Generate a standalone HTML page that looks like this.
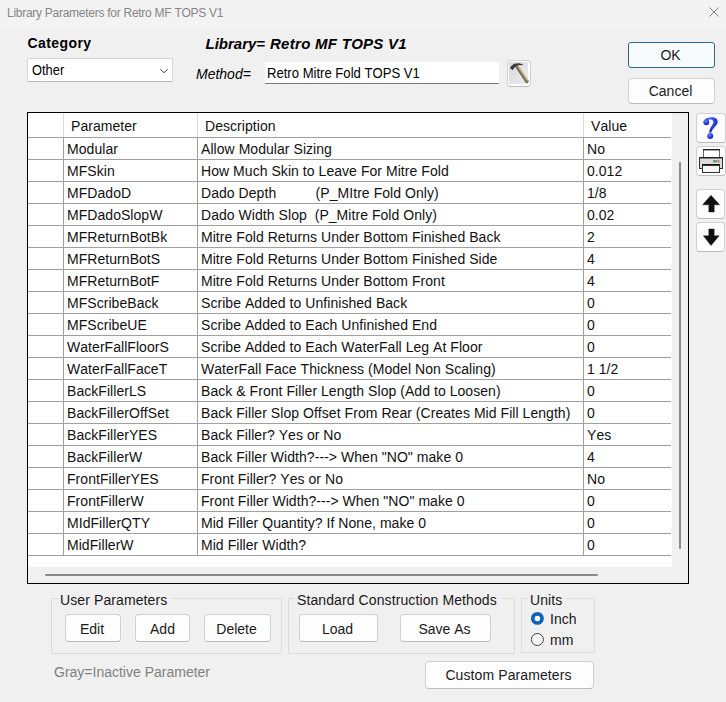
<!DOCTYPE html>
<html><head><meta charset="utf-8">
<style>
*{margin:0;padding:0;box-sizing:border-box}
html,body{width:726px;height:702px;overflow:hidden;background:#f0f0f0;font-family:"Liberation Sans",sans-serif;color:#000;font-kerning:none;font-feature-settings:"kern" 0}
.a{position:absolute;white-space:pre}
#title{left:0;top:0;width:726px;height:28px;background:#f3f3f3}
.btn{position:absolute;background:#fdfdfd;border:1px solid #d0d0d0;border-bottom-color:#bcbcbc;border-radius:4px;font-size:14px;text-align:center;color:#1a1a1a}
.grp{position:absolute;border:1px solid #dcdcdc;border-radius:1px}
.glab{position:absolute;background:#f0f0f0;font-size:14px;padding:0 4px 0 2px;color:#1a1a1a;margin-top:0.5px;letter-spacing:0.1px}
#grid{left:27px;top:112px;width:662px;height:472px;border:1px solid #000;background:#f0f0f0}
.row{position:absolute;left:0;width:644px;height:22px;border-bottom:1px solid #a0a0a0;background:#fff}
.c{position:absolute;top:0;height:22px;font-size:14px;line-height:22px;white-space:pre;color:#111}
.t{font-size:14px;line-height:16px;color:#111;letter-spacing:0.05px}
.vl{position:absolute;width:1px;background:#a0a0a0}
</style></head><body>
<div class="a" id="title"></div>
<div class="a" style="left:7px;top:6px;font-size:12px;letter-spacing:-0.27px;color:#858585">Library Parameters for Retro MF TOPS V1</div>
<svg class="a" style="left:708px;top:6px" width="12" height="12" viewBox="0 0 12 12"><path d="M1.5 1.5L10.5 10.5M10.5 1.5L1.5 10.5" stroke="#858585" stroke-width="1" fill="none"/></svg>

<div class="a" style="left:27.5px;top:35px;font-size:14px;font-weight:bold;letter-spacing:0.42px">Category</div>
<div class="a" style="left:27px;top:58px;width:146px;height:24px;background:#fff;border:1px solid #d5d5d5;border-bottom-color:#bbb;border-radius:2px"></div>
<div class="a" style="left:31.6px;top:62px;font-size:14px;transform:scaleX(0.92);transform-origin:0 0">Other</div>
<svg class="a" style="left:159px;top:67px" width="10" height="8" viewBox="0 0 10 8"><path d="M1.3 2.2L5 5.7L8.7 2.2" stroke="#333" stroke-width="0.95" fill="none"/></svg>

<div class="a" style="left:205.5px;top:35.3px;font-size:15px;font-weight:bold;font-style:italic">Library=</div>
<div class="a" style="left:270px;top:35.3px;font-size:15px;font-weight:bold;font-style:italic;letter-spacing:0.28px">Retro MF TOPS V1</div>
<div class="a" style="left:196px;top:66px;font-size:14px;font-style:italic">Method=</div>
<div class="a" style="left:265px;top:62px;width:234px;height:22px;background:#fff;border-bottom:1px solid #7a7a7a"></div>
<div class="a" style="left:267px;top:65px;font-size:14px;transform:scaleX(0.935);transform-origin:0 0">Retro Mitre Fold TOPS V1</div>
<div class="btn" style="left:507px;top:60px;width:24px;height:27px"></div>
<svg class="a" style="left:507px;top:60px" width="24" height="27" viewBox="0 0 24 27">
<defs><linearGradient id="hb" x1="0" y1="0" x2="1" y2="1"><stop offset="0" stop-color="#d9d9dc"/><stop offset="1" stop-color="#eceaf0"/></linearGradient></defs>
<rect x="2" y="2" width="19" height="22" fill="url(#hb)"/>
<path d="M10 6.3L19.9 21.3" stroke="#6b6648" stroke-width="3.6" stroke-linecap="round"/>
<path d="M10.6 6.4L20.2 20.8" stroke="#a39a74" stroke-width="1.6" stroke-linecap="round"/>
<path d="M11.6 6L20.9 19.9" stroke="#eee5c2" stroke-width="0.9" stroke-linecap="round"/>
<path d="M2.9 8.2C4 6.5 5.5 4.6 7.5 3.8C9 3.2 11 3.1 13 3.4L15.7 4.3L15.7 5.2L12 5C10.8 5.2 9.8 5.5 9.3 5.9L7 7.9L5.7 10.2L4.3 8.9Z" fill="#3a3a3c"/>
</svg>

<div class="btn" style="left:628px;top:42px;width:87px;height:26px;border:1px solid #2f6595;border-radius:3px;background:#f7fbfe;line-height:24px;padding-right:2px">OK</div>
<div class="btn" style="left:628px;top:78px;width:87px;height:26px;line-height:24px;padding-right:2px">Cancel</div>

<!--GRID-->
<div class="a" style="left:27px;top:112px;width:662px;height:472px;border:1px solid #000;background:#f0f0f0"></div>
<div class="a" style="left:28px;top:113px;width:644px;height:454px;background:#fff"></div>
<div class="a" style="left:28px;top:137px;width:643px;height:1px;background:#a0a0a0"></div>
<div class="a" style="left:28px;top:159px;width:643px;height:1px;background:#a0a0a0"></div>
<div class="a" style="left:28px;top:181px;width:643px;height:1px;background:#a0a0a0"></div>
<div class="a" style="left:28px;top:203px;width:643px;height:1px;background:#a0a0a0"></div>
<div class="a" style="left:28px;top:225px;width:643px;height:1px;background:#a0a0a0"></div>
<div class="a" style="left:28px;top:247px;width:643px;height:1px;background:#a0a0a0"></div>
<div class="a" style="left:28px;top:269px;width:643px;height:1px;background:#a0a0a0"></div>
<div class="a" style="left:28px;top:291px;width:643px;height:1px;background:#a0a0a0"></div>
<div class="a" style="left:28px;top:313px;width:643px;height:1px;background:#a0a0a0"></div>
<div class="a" style="left:28px;top:335px;width:643px;height:1px;background:#a0a0a0"></div>
<div class="a" style="left:28px;top:357px;width:643px;height:1px;background:#a0a0a0"></div>
<div class="a" style="left:28px;top:379px;width:643px;height:1px;background:#a0a0a0"></div>
<div class="a" style="left:28px;top:401px;width:643px;height:1px;background:#a0a0a0"></div>
<div class="a" style="left:28px;top:423px;width:643px;height:1px;background:#a0a0a0"></div>
<div class="a" style="left:28px;top:445px;width:643px;height:1px;background:#a0a0a0"></div>
<div class="a" style="left:28px;top:467px;width:643px;height:1px;background:#a0a0a0"></div>
<div class="a" style="left:28px;top:489px;width:643px;height:1px;background:#a0a0a0"></div>
<div class="a" style="left:28px;top:511px;width:643px;height:1px;background:#a0a0a0"></div>
<div class="a" style="left:28px;top:533px;width:643px;height:1px;background:#a0a0a0"></div>
<div class="a" style="left:28px;top:555px;width:643px;height:1px;background:#a0a0a0"></div>
<div class="a" style="left:63px;top:113px;width:1px;height:24px;background:#dcdcdc"></div>
<div class="a" style="left:63px;top:138px;width:1px;height:417px;background:#a0a0a0"></div>
<div class="a" style="left:197px;top:113px;width:1px;height:24px;background:#dcdcdc"></div>
<div class="a" style="left:197px;top:138px;width:1px;height:417px;background:#a0a0a0"></div>
<div class="a" style="left:583px;top:113px;width:1px;height:24px;background:#dcdcdc"></div>
<div class="a" style="left:583px;top:138px;width:1px;height:417px;background:#a0a0a0"></div>
<div class="a t" style="left:71px;top:117.6px">Parameter</div>
<div class="a t" style="left:205px;top:117.6px">Description</div>
<div class="a t" style="left:591px;top:117.6px">Value</div>
<div class="a t" style="left:67px;top:140.6px">Modular</div>
<div class="a t" style="left:201px;top:140.6px">Allow Modular Sizing</div>
<div class="a t" style="left:587px;top:140.6px">No</div>
<div class="a t" style="left:67px;top:162.6px">MFSkin</div>
<div class="a t" style="left:201px;top:162.6px">How Much Skin to Leave For Mitre Fold</div>
<div class="a t" style="left:587px;top:162.6px">0.012</div>
<div class="a t" style="left:67px;top:184.6px">MFDadoD</div>
<div class="a t" style="left:201px;top:184.6px">Dado Depth          (P_MItre Fold Only)</div>
<div class="a t" style="left:587px;top:184.6px">1/8</div>
<div class="a t" style="left:67px;top:206.6px">MFDadoSlopW</div>
<div class="a t" style="left:201px;top:206.6px">Dado Width Slop  (P_Mitre Fold Only)</div>
<div class="a t" style="left:587px;top:206.6px">0.02</div>
<div class="a t" style="left:67px;top:228.6px">MFReturnBotBk</div>
<div class="a t" style="left:201px;top:228.6px">Mitre Fold Returns Under Bottom Finished Back</div>
<div class="a t" style="left:587px;top:228.6px">2</div>
<div class="a t" style="left:67px;top:250.6px">MFReturnBotS</div>
<div class="a t" style="left:201px;top:250.6px">Mitre Fold Returns Under Bottom Finished Side</div>
<div class="a t" style="left:587px;top:250.6px">4</div>
<div class="a t" style="left:67px;top:272.6px">MFReturnBotF</div>
<div class="a t" style="left:201px;top:272.6px">Mitre Fold Returns Under Bottom Front</div>
<div class="a t" style="left:587px;top:272.6px">4</div>
<div class="a t" style="left:67px;top:294.6px">MFScribeBack</div>
<div class="a t" style="left:201px;top:294.6px">Scribe Added to Unfinished Back</div>
<div class="a t" style="left:587px;top:294.6px">0</div>
<div class="a t" style="left:67px;top:316.6px">MFScribeUE</div>
<div class="a t" style="left:201px;top:316.6px">Scribe Added to Each Unfinished End</div>
<div class="a t" style="left:587px;top:316.6px">0</div>
<div class="a t" style="left:67px;top:338.6px">WaterFallFloorS</div>
<div class="a t" style="left:201px;top:338.6px">Scribe Added to Each WaterFall Leg At Floor</div>
<div class="a t" style="left:587px;top:338.6px">0</div>
<div class="a t" style="left:67px;top:360.6px">WaterFallFaceT</div>
<div class="a t" style="left:201px;top:360.6px">WaterFall Face Thickness (Model Non Scaling)</div>
<div class="a t" style="left:587px;top:360.6px">1 1/2</div>
<div class="a t" style="left:67px;top:382.6px">BackFillerLS</div>
<div class="a t" style="left:201px;top:382.6px">Back &amp; Front Filler Length Slop (Add to Loosen)</div>
<div class="a t" style="left:587px;top:382.6px">0</div>
<div class="a t" style="left:67px;top:404.6px">BackFillerOffSet</div>
<div class="a t" style="left:201px;top:404.6px">Back Filler Slop Offset From Rear (Creates Mid Fill Length)</div>
<div class="a t" style="left:587px;top:404.6px">0</div>
<div class="a t" style="left:67px;top:426.6px">BackFillerYES</div>
<div class="a t" style="left:201px;top:426.6px">Back Filler? Yes or No</div>
<div class="a t" style="left:587px;top:426.6px">Yes</div>
<div class="a t" style="left:67px;top:448.6px">BackFillerW</div>
<div class="a t" style="left:201px;top:448.6px">Back Filler Width?---&gt; When "NO" make 0</div>
<div class="a t" style="left:587px;top:448.6px">4</div>
<div class="a t" style="left:67px;top:470.6px">FrontFillerYES</div>
<div class="a t" style="left:201px;top:470.6px">Front Filler? Yes or No</div>
<div class="a t" style="left:587px;top:470.6px">No</div>
<div class="a t" style="left:67px;top:492.6px">FrontFillerW</div>
<div class="a t" style="left:201px;top:492.6px">Front Filler Width?---&gt; When "NO" make 0</div>
<div class="a t" style="left:587px;top:492.6px">0</div>
<div class="a t" style="left:67px;top:514.6px">MIdFillerQTY</div>
<div class="a t" style="left:201px;top:514.6px">Mid Filler Quantity? If None, make 0</div>
<div class="a t" style="left:587px;top:514.6px">0</div>
<div class="a t" style="left:67px;top:536.6px">MidFillerW</div>
<div class="a t" style="left:201px;top:536.6px">Mid Filler Width?</div>
<div class="a t" style="left:587px;top:536.6px">0</div>
<div class="a" style="left:679px;top:162px;width:2px;height:387px;background:#8a8a8a;border-radius:1px"></div>
<div class="a" style="left:45px;top:574px;width:553px;height:2px;background:#8a8a8a;border-radius:1px"></div>
<!--/GRID-->

<div class="btn" style="left:696px;top:113px;width:30px;height:30px"></div>
<svg class="a" style="left:696px;top:113px" width="30" height="30" viewBox="0 0 30 30">
<defs><radialGradient id="qg" cx="0.4" cy="0.3" r="0.8"><stop offset="0" stop-color="#6b8cff"/><stop offset="0.5" stop-color="#2a3fe0"/><stop offset="1" stop-color="#0e1a9a"/></radialGradient></defs>
<path d="M8.5 7C10 4.6 14 4 17 4.3C20.5 4.8 22 7 21.7 9.5C21.3 12.5 17 14.5 15.3 19.4L13.1 19.4C13.4 15.5 16 12.5 17 10.5C18 8.5 17 6.6 14.6 6.4C12.9 6.3 12.2 7 11.6 8Z" fill="url(#qg)"/>
<circle cx="10.3" cy="9.3" r="2.9" fill="url(#qg)"/>
<circle cx="14.2" cy="23" r="3" fill="url(#qg)"/>
</svg>
<div class="btn" style="left:696px;top:146px;width:30px;height:30px"></div>
<svg class="a" style="left:696px;top:146px" width="30" height="30" viewBox="0 0 30 30">
<rect x="7.5" y="3.5" width="16" height="9" fill="#fff" stroke="#666" stroke-width="1"/>
<rect x="7" y="3" width="17" height="1.4" fill="#222"/>
<rect x="3.5" y="11.5" width="23" height="11" fill="#dcdcdc" stroke="#333" stroke-width="1"/>
<rect x="4" y="11" width="22" height="1.5" fill="#222"/>
<rect x="17" y="14" width="4" height="2.5" fill="#7c9a80"/>
<rect x="21.5" y="14" width="2" height="2.5" fill="#c77"/>
<rect x="6" y="18" width="18" height="2" fill="#111"/>
<rect x="6.5" y="19.5" width="17" height="7" fill="#f6f6f6" stroke="#333" stroke-width="1"/>
</svg>
<div class="btn" style="left:696px;top:189px;width:29px;height:30px"></div>
<svg class="a" style="left:696px;top:189px" width="29" height="30" viewBox="0 0 29 30">
<path d="M15 6.3L23.6 15.8L18.2 15.8L18.2 23L12.8 23L12.8 15.8L6.6 15.8Z" fill="#111" stroke="#111" stroke-width="0.4" stroke-linejoin="round"/>
</svg>
<div class="btn" style="left:696px;top:222px;width:29px;height:30px"></div>
<svg class="a" style="left:696px;top:222px" width="29" height="30" viewBox="0 0 29 30">
<path d="M12.8 7L18.2 7L18.2 13.8L23.2 13.8L15 23.6L7.4 13.8L12.8 13.8Z" fill="#111" stroke="#111" stroke-width="0.4" stroke-linejoin="round"/>
</svg>

<div class="grp" style="left:51px;top:598px;width:231px;height:56px"></div>
<div class="glab" style="left:58px;top:591px">User Parameters</div>
<div class="btn" style="left:65px;top:614px;width:56px;height:28px;line-height:28px;padding-right:2px">Edit</div>
<div class="btn" style="left:135px;top:614px;width:55px;height:28px;line-height:28px">Add</div>
<div class="btn" style="left:204px;top:614px;width:67px;height:28px;line-height:28px;padding-right:2px">Delete</div>

<div class="grp" style="left:288px;top:598px;width:227px;height:56px"></div>
<div class="glab" style="left:295px;top:591px">Standard Construction Methods</div>
<div class="btn" style="left:299px;top:614px;width:79px;height:28px;line-height:28px;padding-right:2px">Load</div>
<div class="btn" style="left:400px;top:614px;width:91px;height:28px;line-height:28px;padding-right:2px">Save As</div>

<div class="grp" style="left:521px;top:598px;width:74px;height:55px"></div>
<div class="glab" style="left:528px;top:591px">Units</div>
<svg class="a" style="left:530px;top:611px" width="15" height="36" viewBox="0 0 15 36">
<circle cx="7.4" cy="7.4" r="4.6" fill="#fff" stroke="#0f62b5" stroke-width="3.7"/>
<circle cx="7.4" cy="28.5" r="6" fill="#f4f4f4" stroke="#444" stroke-width="1"/>
</svg>
<div class="a" style="left:550px;top:611px;font-size:14px;color:#1a1a1a">Inch</div>
<div class="a" style="left:550px;top:632px;font-size:14px;color:#1a1a1a">mm</div>

<div class="a" style="left:54px;top:664px;font-size:14px;color:#808080">Gray=Inactive Parameter</div>
<div class="btn" style="left:425px;top:661px;width:169px;height:28px;line-height:27px;letter-spacing:0.1px;padding-right:2px">Custom Parameters</div>
</body></html>
